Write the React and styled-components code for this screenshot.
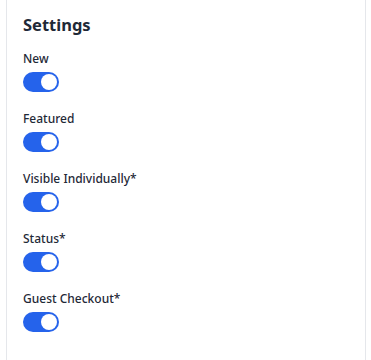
import React from "react";
import styled, { createGlobalStyle } from "styled-components";

const Global = createGlobalStyle`
  html, body { margin: 0; padding: 0; background: #ffffff; }
  body { font-family: "Noto Sans", "Open Sans", sans-serif; color: #1f2937; }
`;

const Page = styled.div`
  padding: 0 5px 0 6px;
  height: 360px;
  overflow: hidden;
`;

const Card = styled.section`
  margin-top: -10px;
  border: 1px solid #e5e7eb;
  border-radius: 8px;
  background: #fff;
  padding: 20px 16px 40px;
  min-height: 400px;
  box-sizing: border-box;
`;

const Title = styled.h2`
  margin: 0 0 13px;
  font-size: 16.5px;
  line-height: 28px;
  font-weight: 700;
  color: #1f2937;
`;

const List = styled.div`
  display: flex;
  flex-direction: column;
  gap: 20px;
`;

const Field = styled.div`
  display: flex;
  flex-direction: column;
  align-items: flex-start;
  gap: 6px;
`;

const Label = styled.label`
  font-size: 12px;
  line-height: 14px;
  font-weight: 500;
  color: #1f2937;
`;

const Track = styled.button`
  position: relative;
  width: 36px;
  height: 20px;
  padding: 0;
  border: none;
  border-radius: 10px;
  background: ${(p) => (p.$on ? "#2563eb" : "#d1d5db")};
  cursor: pointer;
`;

const Knob = styled.span`
  position: absolute;
  top: 2px;
  left: ${(p) => (p.$on ? "18px" : "2px")};
  width: 16px;
  height: 16px;
  border-radius: 50%;
  background: #fff;
`;

const Toggle = ({ on }) => (
  <Track type="button" role="switch" aria-checked={on} $on={on}>
    <Knob $on={on} />
  </Track>
);

const items = ["New", "Featured", "Visible Individually*", "Status*", "Guest Checkout*"];

export default function App() {
  return (
    <>
      <Global />
      <Page>
        <Card>
          <Title>Settings</Title>
          <List>
            {items.map((t) => (
              <Field key={t}>
                <Label>{t}</Label>
                <Toggle on />
              </Field>
            ))}
          </List>
        </Card>
      </Page>
    </>
  );
}
